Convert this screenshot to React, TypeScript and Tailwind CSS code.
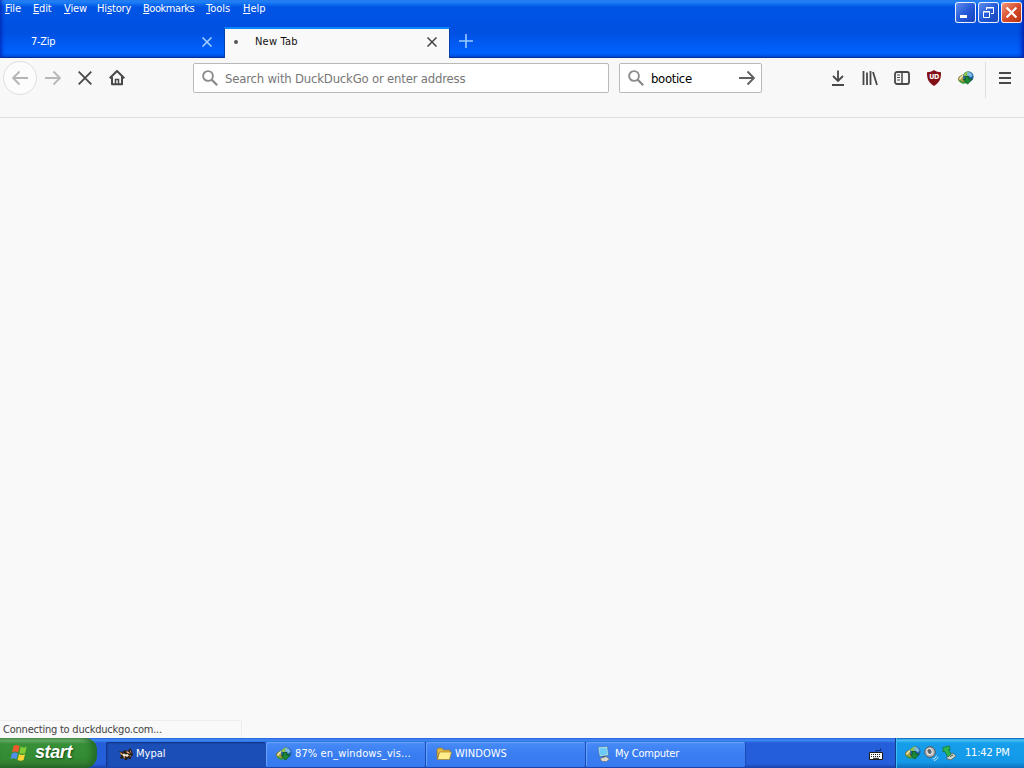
import type { ReactNode } from 'react'
import clsx from 'clsx'

const menus = [
  { label: 'File', width: 'w-7' },
  { label: 'Edit', width: 'w-[31px]' },
  { label: 'View', width: 'w-[33px]' },
  { label: 'History', at: 2, width: 'w-[46px]' },
  { label: 'Bookmarks', width: 'w-[63px]' },
  { label: 'Tools', width: 'w-[37px]' },
  { label: 'Help', width: 'w-8' },
]

function MenuLabel({ label, at = 0 }: { label: string; at?: number }) {
  return (
    <>
      {label.slice(0, at)}
      <span className="underline decoration-1 underline-offset-1 [text-decoration-skip-ink:none]">{label[at]}</span>
      {label.slice(at + 1)}
    </>
  )
}

function CloseGlyph({ className }: { className?: string }) {
  return (
    <svg viewBox="0 0 10 10" className={clsx('shrink-0', className)} stroke="currentColor" strokeWidth="1.5" fill="none">
      <path d="M.5.5l9 9M9.5.5l-9 9" />
    </svg>
  )
}

function SearchGlyph() {
  return (
    <svg viewBox="0 0 16 16" className="h-4 w-4 shrink-0" stroke="#8b8b8b" fill="none">
      <circle cx="6" cy="6" r="4.9" strokeWidth="1.9" />
      <path d="M9.6 9.6l5.6 5.6" strokeWidth="2.2" />
    </svg>
  )
}

function Arrow({ className, flip }: { className?: string; flip?: boolean }) {
  return (
    <svg viewBox="0 0 16 16" className={clsx('h-4 w-4', flip && 'rotate-180', className)} stroke="currentColor" strokeWidth="1.9" fill="none">
      <path d="M0 8h14.5M8.5 1.5L15 8l-6.5 6.5" />
    </svg>
  )
}

// Internet Download Manager globe with the green arrow
function GlobeIcon({ className }: { className?: string }) {
  return (
    <svg viewBox="0 0 16 16" className={clsx('h-4 w-4 shrink-0', className)}>
      <ellipse cx="5" cy="8.5" rx="4.6" ry="3.4" fill="#b9a24a" stroke="#6c7228" strokeWidth=".8" transform="rotate(-20 5 8.5)" />
      <path d="M1.5 9.5C2.5 7 4.5 5.6 7 5" stroke="#efe7ae" strokeWidth="1.3" fill="none" />
      <path d="M1.5 10.5l3 2.5 4-.5" stroke="#2d9b3a" strokeWidth="1.4" fill="none" />
      <circle cx="10.3" cy="6.6" r="5.3" fill="#2366a6" />
      <path d="M5.2 5.5C6 2.5 8.4 1.2 11.5 1.5L11 4 8.5 6.5z" fill="#8fc24a" />
      <path d="M9.5 2l3.5.8 1.6 3-2.2 1.4L9 5z" fill="#7fb9e3" />
      <path d="M7.3 6.5h3.5V9h3.4L9.6 14.2 5 9.5h2.3z" fill="#1c8a34" stroke="#0f4d1c" strokeWidth=".7" />
    </svg>
  )
}

function WindowButton({ close, children }: { close?: boolean; children: ReactNode }) {
  return (
    <button
      className={clsx(
        'flex h-[21px] w-[21px] items-center justify-center rounded-[3px] border border-white/90',
        close ? 'bg-linear-to-br from-[#ec947a] via-[#d84d2b] to-[#b73210]' : 'bg-linear-to-br from-[#608cec] via-[#255ad9] to-[#1644bd]',
      )}
    >
      {children}
    </button>
  )
}

function TitleBar() {
  return (
    <header className="relative flex h-[58px] flex-col border-b border-[#00329d] bg-[linear-gradient(180deg,#3296ff_0,#1678f5_3px,#0055e5_7px,#0050e1_32px,#005cf5_46px,#0062fc_53px,#0050dd_57px)] text-white shadow-[inset_4px_0_4px_-3px_#001eac,inset_-4px_0_4px_-2px_#001eac]">
      <nav className="flex h-[27px] pl-[5px] pt-[3px] text-[11px] leading-[12px]">
        {menus.map((menu, i) => (
          <span
            key={menu.label}
            className={clsx('whitespace-nowrap', menu.width, i === 4 ? 'tracking-[-0.45px]' : i > 4 ? 'tracking-[0px]' : 'tracking-[-0.15px]')}
          >
            <MenuLabel label={menu.label} at={menu.at} />
          </span>
        ))}
      </nav>
      <div className="flex h-[30px] items-stretch text-[11px]">
        <div className="flex w-[224px] items-center pl-[31px] pr-3">
          <span className="flex-1 pt-px tracking-[-0.3px]">7-Zip</span>
          <CloseGlyph className="h-[10px] w-[10px] text-[#a8d4ff]" />
        </div>
        <div className="-mb-px flex w-[226px] items-center border-x border-[#063fae] border-t-2 border-t-[#0a84ff] bg-[#f9f9fa] pb-[3px] pl-[9px] pr-3 text-[#111]">
          <span className="h-1 w-1 rounded-full bg-[#555]" />
          <span className="ml-[17px] flex-1 pt-px tracking-[0.2px]">New Tab</span>
          <CloseGlyph className="h-[10px] w-[10px] text-[#444]" />
        </div>
        <svg viewBox="0 0 14 14" className="ml-[9px] mt-[7px] h-[14px] w-[14px]" stroke="#99ccff" strokeWidth="1.6">
          <path d="M7 0v14M0 7h14" />
        </svg>
      </div>
      <div className="absolute right-[2px] top-[2px] flex gap-[2px]">
        <WindowButton>
          <svg viewBox="0 0 21 21" className="h-[21px] w-[21px] shrink-0"><path d="M5 13h7v3H5z" fill="#fff" /></svg>
        </WindowButton>
        <WindowButton>
          <svg viewBox="0 0 21 21" className="h-[21px] w-[21px] shrink-0" fill="none" stroke="#fff">
            <path d="M8.5 8V5.5h7v6H13M8 6h8M5.5 9.5h6v6h-6zM5 10h7" />
          </svg>
        </WindowButton>
        <WindowButton close>
          <CloseGlyph className="h-[11px] w-[11px] stroke-2" />
        </WindowButton>
      </div>
    </header>
  )
}

function Toolbar() {
  return (
    <div className="flex h-[60px] items-start border-b border-[#dedede] bg-[#f8f8f8] pt-1 text-[#484848]">
      <div className="flex h-8 w-[193px] items-center pl-[3px]">
        <span className="flex h-[34px] w-[34px] shrink-0 items-center justify-center rounded-full border border-[#dedede] bg-[#fcfcfc] text-[#b5b5b5]">
          <Arrow flip />
        </span>
        <Arrow className="ml-[8px] text-[#b8b8b8]" />
        <CloseGlyph className="ml-[17px] h-[14px] w-[14px] stroke-[1.3]" />
        <svg viewBox="0 0 16 16" className="ml-[17px] h-4 w-4" fill="none" stroke="currentColor" strokeWidth="2">
          <path d="M.7 8.2L8 1l7.3 7.2M3 7v7.2h10V7" strokeLinejoin="round" />
          <path d="M6.5 14V9.5h3V14" strokeWidth="1.5" />
        </svg>
      </div>
      <div className="mt-px flex h-[30px] w-[416px] items-center rounded-[2px] border border-[#b9b9b9] bg-white pl-2">
        <SearchGlyph />
        <span className="ml-[7px] whitespace-nowrap pt-px text-[13px] tracking-[-0.2px] text-[#777]">Search with DuckDuckGo or enter address</span>
      </div>
      <div className="ml-[10px] mt-px flex h-[30px] w-[143px] items-center rounded-[2px] border border-[#b9b9b9] bg-white pl-2 pr-[6px]">
        <SearchGlyph />
        <span className="ml-[7px] flex-1 pt-px text-[13px] tracking-[-0.35px] text-black">bootice</span>
        <Arrow className="text-[#606060]" />
      </div>
      <div className="ml-auto flex h-8 items-center gap-4">
        <svg viewBox="0 0 16 16" className="h-4 w-4" fill="none" stroke="currentColor" strokeWidth="1.8">
          <path d="M8 .5V11M3 6l5 5 5-5M2 15h12" />
        </svg>
        <svg viewBox="0 0 16 16" className="h-4 w-4" fill="none" stroke="currentColor" strokeWidth="1.8">
          <path d="M1.5 1v14M5 2.5V15M8.5 1v14M11 2l4 13" />
        </svg>
        <svg viewBox="0 0 16 16" className="h-4 w-4" fill="none" stroke="currentColor">
          <rect x="1" y="2" width="14" height="12" rx="2" strokeWidth="1.8" />
          <path d="M8 2v12" strokeWidth="1.5" /><path d="M3 5h3M3 7.5h3M3 10h3" />
        </svg>
        <span className="relative flex h-4 w-4 items-center justify-center">
          <svg viewBox="0 0 16 16" className="absolute h-4 w-4" fill="#850f16">
            <path d="M8 0c2 1.5 4.5 2.2 7 2.2 0 6.5-.8 9.5-7 13.8C1.8 11.7 1 8.7 1 2.2 3.5 2.2 6 1.5 8 0z" />
          </svg>
          <b className="relative mt-[-2px] text-[7px] leading-none tracking-[-0.5px] text-white">UD</b>
        </span>
        <GlobeIcon />
      </div>
      <div className="ml-[11px] flex h-9 w-[39px] items-start border-l border-[#dedede] pl-[13px] pt-[10px]">
        <svg viewBox="0 0 12 12" className="h-3 w-3" stroke="currentColor" strokeWidth="1.8">
          <path d="M0 1h12M0 6h12M0 11h12" />
        </svg>
      </div>
    </div>
  )
}

function MypalIcon() {
  return (
    <svg viewBox="0 0 16 16" className="h-4 w-4 shrink-0">
      <path d="M1 5l3 1 3-2 3 1 2-3 2 3 1 4-2 2v2h-2l-1-1-1 2H7l-1-2-2 1-2-1 1-3z" fill="#2a211d" />
      <path d="M2 6l3 2-2 1zM8 5l3 1 1 2-3-1zM12 4l1.5 3L12 6z" fill="#e9a561" />
      <path d="M4 8.5l2-1 1.5 1 2-.5 1.5 1.5-2 1.5-1.5-1-1.5 1z" fill="#f6ead4" />
      <path d="M5 11l2-.5v2zM11 10l2-1-.5 2z" fill="#c98a4f" />
    </svg>
  )
}

function FolderIcon() {
  return (
    <svg viewBox="0 0 16 16" className="h-4 w-4 shrink-0">
      <path d="M1 3.5L2.5 2H6l1.5 2H14v3H3L1 13z" fill="#e3b941" stroke="#917126" strokeWidth=".7" />
      <path d="M3.5 6h12l-2 7.5h-12z" fill="#ffec8c" stroke="#a88427" strokeWidth=".7" />
    </svg>
  )
}

function ComputerIcon() {
  return (
    <svg viewBox="0 0 16 16" className="h-4 w-4 shrink-0">
      <path d="M2 1l9.5-.5 1 9-9 1z" fill="#c8e2eb" stroke="#357aaa" strokeWidth=".7" />
      <path d="M3.3 2.3l7.2-.4.7 6.5-6.9.8z" fill="#6accf6" />
      <path d="M6.5 10h3.5v2H6.5z" fill="#315c8e" />
      <path d="M4 12.5l6-2 3.5 2.5-3 2.5H6z" fill="#d9d8ce" stroke="#666" strokeWidth=".6" />
    </svg>
  )
}

function TaskButton({ icon, active, children }: { icon: ReactNode; active?: boolean; children: ReactNode }) {
  return (
    <button
      className={clsx(
        'flex h-[25px] w-[160px] items-center rounded-[2px] border-r border-[#1c4cb4] text-left text-[11px] text-white',
        active
          ? 'bg-[#1c4eb8] pl-[12px] shadow-[inset_1px_1px_2px_#10337e]'
          : 'bg-linear-to-b from-[#488bf8] via-[#397df1] to-[#367af0] pl-[10px] shadow-[inset_1px_1px_1px_#69a3ff]',
      )}
    >
      {icon}
      <span className={clsx('whitespace-nowrap', active ? 'ml-[2px]' : 'ml-[3px]')}>{children}</span>
    </button>
  )
}

function StartButton() {
  return (
    <button className="flex h-[30px] w-[97px] items-center rounded-r-[12px] bg-[linear-gradient(180deg,#59a958_0,#77b876_2px,#389038_6px,#328c32_20px,#397f35_25px,#246824_30px)] pl-[10px] text-white shadow-[inset_-5px_0_6px_#246b28]">
      <svg viewBox="0 0 20 20" className="h-5 w-5 shrink-0">
        <path d="M3.6 3c2-1.3 4-1.2 6 0L8.2 9.3c-2-1.2-4-1.1-6 0z" fill="#f05a2b" />
        <path d="M10.7 3.6c2.1 1.2 4 1.1 6-.1l-1.4 6.4c-2 1.1-4 1.1-6 0z" fill="#80cd35" />
        <path d="M1.9 10.4c2-1.2 4-1.2 6 0l-1.4 5.8c-2-1.2-4-1.2-6 0z" fill="#508eea" />
        <path d="M9 11c2 1.2 4 1.2 6 0l-1.4 6c-2 1.1-4 1.1-6 0z" fill="#ffd536" />
      </svg>
      <span className="mb-[2px] ml-[5px] font-['Liberation_Sans',sans-serif] text-[18px] font-bold italic leading-none tracking-[-0.4px] [font-stretch:normal] [text-shadow:1px_1px_2px_#174817]">start</span>
    </button>
  )
}

function Taskbar() {
  return (
    <footer className="flex h-[30px] items-center bg-[linear-gradient(180deg,#245edb_0,#3f8cf3_2px,#245edb_5px,#245edb_26px,#1941a5_30px)]">
      <StartButton />
      <div className="ml-[9px] mt-[2px] flex">
        <TaskButton icon={<MypalIcon />} active>Mypal</TaskButton>
        <TaskButton icon={<GlobeIcon />}>
          <span className="tracking-[0.12px]">87% en_windows_vis...</span>
        </TaskButton>
        <TaskButton icon={<FolderIcon />}>
          <span className="tracking-[0.05px]">WINDOWS</span>
        </TaskButton>
        <TaskButton icon={<ComputerIcon />}>
          <span className="tracking-[-0.25px]">My Computer</span>
        </TaskButton>
      </div>
      <svg viewBox="0 0 14 14" className="ml-auto mr-[12px] mt-px h-[14px] w-[14px]">
        <path d="M7 5V3.5h4.500V1.500" stroke="#122d66" fill="none" />
        <path d="M.5 5.500h13v7H.5z" fill="#fff" stroke="#1a1a1a" />
        <path d="M2 7.500h10M2 9.500h10" stroke="#1a1a1a" strokeDasharray="1 1" />
        <path d="M4 11.300h6" stroke="#1a1a1a" />
      </svg>
      <div className="flex h-[30px] w-[129px] items-center border-l border-[#103c8e] bg-[linear-gradient(180deg,#0c59b9_0,#4cc5f8_2px,#169eea_5px,#1298e8_24px,#0d6fbb_30px)] pl-[9px] shadow-[inset_1px_0_#44bdf4]">
        <GlobeIcon />
        <svg viewBox="0 0 16 16" className="ml-[2px] h-4 w-4">
          <circle cx="7" cy="7" r="5.3" fill="#b5b8b8" stroke="#55595c" />
          <ellipse cx="6.500" cy="6.500" rx="2.500" ry="3" fill="#5d6468" stroke="#eee" transform="rotate(-30 6.500 6.500)" />
          <path d="M9.500 14c2 0 3.500-1.500 4-3.500M11 15.500c2-.5 3.500-1.500 4-3.500" stroke="#cfe4f2" fill="none" />
        </svg>
        <svg viewBox="0 0 16 16" className="ml-[2px] h-4 w-4">
          <path d="M6 11l6-3 3 3-5 4-4-1z" fill="#ccd3cf" stroke="#4d5553" strokeWidth=".7" />
          <path d="M2 2.500L8.500 1l.5 4-1.500-.5L10 9l-3 3-3.500-6L2 7z" fill="#2bb84d" stroke="#176b31" strokeWidth=".7" />
          <path d="M9 11.500l3-1.500" stroke="#35593e" />
        </svg>
        <span className="ml-[8px] whitespace-nowrap pt-px text-[11px] tracking-[-0.2px] text-white">11:42 PM</span>
      </div>
    </footer>
  )
}

export default function App() {
  return (
    <div className="flex h-[768px] w-[1024px] flex-col overflow-hidden bg-[#f9f9f9] font-['DejaVu_Sans_Condensed','DejaVu_Sans','Noto_Sans',sans-serif] [font-stretch:condensed]">
      <TitleBar />
      <Toolbar />
      <main className="flex flex-1 items-end">
        <div className="flex h-[18px] w-[242px] items-center border-r border-t border-[#eeeeee] bg-[#f9f9f9] pl-[3px] pt-[2px] text-[11px] tracking-[-0.22px] text-[#444]">
          Connecting to duckduckgo.com...
        </div>
      </main>
      <Taskbar />
    </div>
  )
}
